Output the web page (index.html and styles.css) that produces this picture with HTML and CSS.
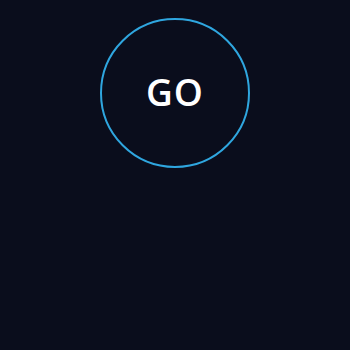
FILE: index.html
```html
<!DOCTYPE html>
<html>
<head>
<meta charset="utf-8">
<link rel="stylesheet" href="styles.css">
</head>
<body>
<div class="page">
  <button class="go">GO</button>
</div>
</body>
</html>
```
FILE: styles.css
```css
html, body {
  margin: 0;
  padding: 0;
  background: #0a0d1c;
  height: 100%;
}
.page {
  display: flex;
  justify-content: center;
  padding-top: 18px;
}
.go {
  width: 150px;
  height: 150px;
  border-radius: 50%;
  border: 2px solid #2fa6df;
  background: transparent;
  color: #ffffff;
  font-family: "Open Sans", sans-serif;
  font-weight: 600;
  font-size: 37px;
  letter-spacing: 1px;
  padding: 0 0 4px 0;
  box-sizing: border-box;
  display: flex;
  align-items: center;
  justify-content: center;
}
```
